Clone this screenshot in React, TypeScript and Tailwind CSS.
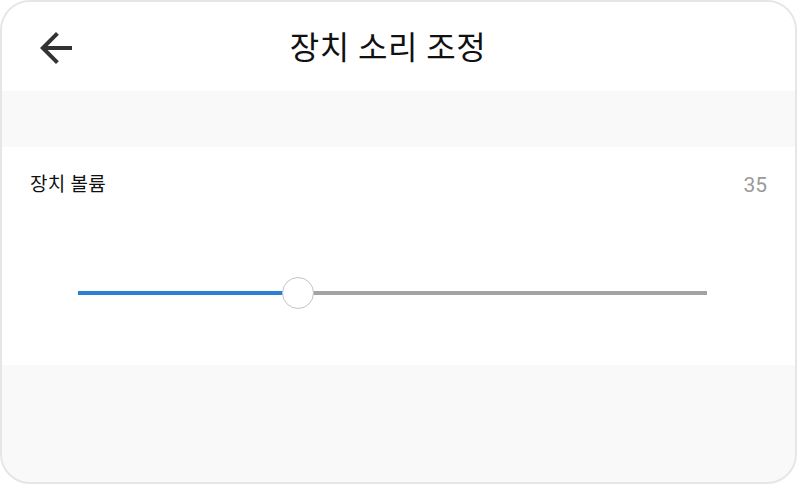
import { useState } from "react";

const FONT = "font-['Roboto','Noto_Sans_CJK_KR',sans-serif]";

function BackArrow() {
  return (
    <svg viewBox="0 0 24 24" className="w-[48px] h-[48px] fill-[#333333]">
      <path d="M20 11H7.83l5.59-5.59L12 4l-8 8 8 8 1.41-1.41L7.83 13H20v-2z" />
    </svg>
  );
}

function VolumeSlider({ value }: { value: number }) {
  return (
    <div className="relative h-[32px] ml-[48px] mr-[60px] flex items-center">
      <div className="h-[4px] w-full bg-[#a3a3a3] flex">
        <div className="h-full bg-[#2d7fd2]" style={{ width: `${value}%` }} />
      </div>
      {/* 손잡이 */}
      <div
        className="absolute top-0 w-[32px] h-[32px] -ml-[16px] rounded-full bg-white border border-[#c4c4c4]"
        style={{ left: `${value}%` }}
      />
    </div>
  );
}

export default function App() {
  const [volume] = useState(35);

  return (
    <div className={`w-[797px] h-[484px] ${FONT}`}>
      <div className="h-full rounded-[30px] border-2 border-[#e6e6e6] overflow-hidden bg-[#f9f9f9] flex flex-col">
        {/* 헤더 */}
        <div className="h-[89px] bg-white flex items-center pt-[3px]">
          <div className="pl-[30px]">
            <BackArrow />
          </div>
          <div className="flex-1 text-center text-[32px] leading-[40px] tracking-[0.5px] text-[#111111]">
            장치 소리 조정
          </div>
          <div className="w-[99px]" />
        </div>

        <div className="h-[56px]" />

        {/* 볼륨 카드 */}
        <div className="h-[218px] bg-white px-[28px]">
          <div className="mt-[25px] flex items-center justify-between">
            <span className="text-[19px] leading-[26px] tracking-[0.3px] text-[#111111]">장치 볼륨</span>
            <span className="text-[21px] leading-[26px] text-[#9a9a9a]">{volume}</span>
          </div>
          <div className="mt-[79px]">
            <VolumeSlider value={volume} />
          </div>
        </div>
      </div>
    </div>
  );
}
